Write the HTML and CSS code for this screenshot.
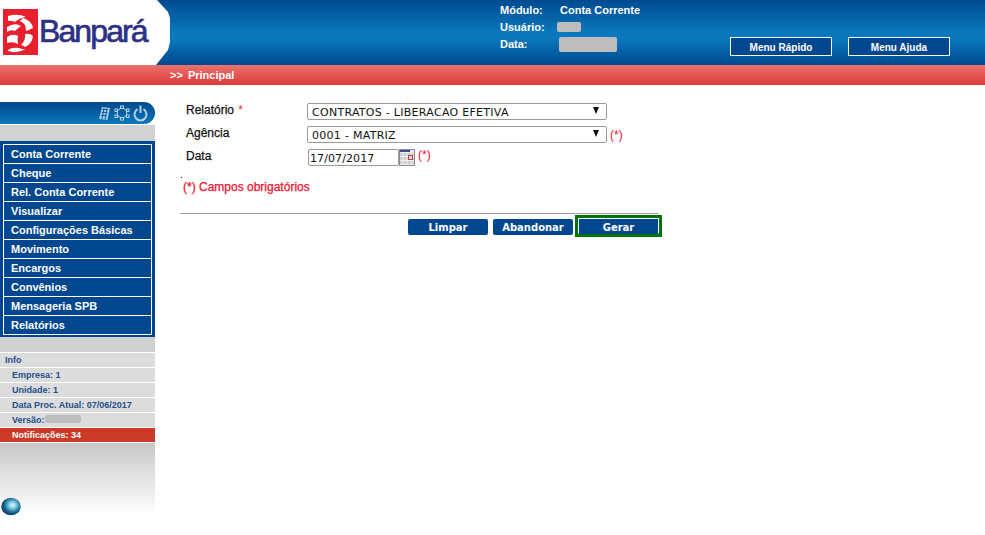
FILE: index.html
```html
<!DOCTYPE html>
<html lang="en">

<head>
    <meta charset="UTF-8">
    <title>Banpará - Conta Corrente</title>
    <link rel="stylesheet" href="styles.css">
</head>

<body>
    <header class="topbar">
        <div class="logo">
            <svg class="logo-bg" width="171" height="65" viewBox="0 0 171 65">
                <path d="M0 0H157L168 12L170 18V42L168 50L156 65H0Z" fill="#fff" />
            </svg>
            <svg class="logo-mark" width="35" height="46" viewBox="0 0 35 46">
                <rect width="35" height="46" fill="#e8202d" />
                <path d="M5 7Q15 4 23 8Q16 9 12 13Q8 11 5 12Z" fill="#fff" />
                <path d="M4 18Q12 13 18 17Q14 20 12 22Q8 20 4 23Z" fill="#fff" />
                <path d="M4 28Q10 24 15 27Q14 31 15 35Q10 32 4 34Z" fill="#fff" />
                <path d="M5 41Q9 38 16 39Q21 41 23 40Q14 45 5 42Z" fill="#fff" />
                <path d="M20 9Q29 12 30 19Q26 21 23 22Q23 14 17 12Z" fill="#fff" />
                <path d="M22 25Q27 24 30 27Q29 35 22 38Q20 36 18 36Q23 31 22 25Z" fill="#fff" />
            </svg>
            <span class="logo-text">Banpará</span>
        </div>
        <div class="session">
            <div class="session-row"><span class="session-label">Módulo:</span><span>Conta Corrente</span></div>
            <div class="session-row"><span class="session-label">Usuário:</span><span class="hidden-value user"></span></div>
            <div class="session-row"><span class="session-label">Data:</span><span class="hidden-value date"></span></div>
        </div>
        <div class="top-buttons">
            <a class="top-button">Menu Rápido</a>
            <a class="top-button">Menu Ajuda</a>
        </div>
    </header>

    <div class="crumb">&gt;&gt; <span>Principal</span></div>

    <div class="page">
        <aside class="sidebar">
            <div class="side-tools">
                <svg width="13" height="15" viewBox="0 0 13 15">
                    <path d="M4 1L12 2L9.500 14L1 13Z" fill="#a9c8e4" />
                    <path d="M4.500 3.500H10M3.800 6.500H9.500M3.200 9.500H8.800M6 2L4 13M9 2.500L7 13.500" stroke="#0a63a6" stroke-width="1" fill="none" />
                </svg>
                <svg width="16" height="16" viewBox="0 0 16 16" fill="none" stroke="#b9d3e8">
                    <circle cx="8" cy="8" r="4.800" stroke-width="1" />
                    <g fill="#0a5c9e" stroke-width="1">
                        <rect x="6.500" y="1" width="3" height="2.500" />
                        <rect x="6.500" y="12.500" width="3" height="2.500" />
                        <rect x="1" y="4" width="2.500" height="2.500" />
                        <rect x="12.500" y="4" width="2.500" height="2.500" />
                        <rect x="1" y="10" width="2.500" height="2.500" />
                        <rect x="12.500" y="10" width="2.500" height="2.500" />
                    </g>
                </svg>
                <svg width="15" height="17" viewBox="0 0 15 17" fill="none" stroke="#b4d2ea" stroke-width="2">
                    <path d="M4.500 4.200A6 6 0 1 0 10.500 4.200" />
                    <path d="M7.500 0.500V8" />
                </svg>
            </div>
            <div class="side-gap"></div>
            <nav class="menu">
                <a>Conta Corrente</a>
                <a>Cheque</a>
                <a>Rel. Conta Corrente</a>
                <a>Visualizar</a>
                <a>Configurações Básicas</a>
                <a>Movimento</a>
                <a>Encargos</a>
                <a>Convênios</a>
                <a>Mensageria SPB</a>
                <a>Relatórios</a>
            </nav>
            <div class="info-gap"></div>
            <ul class="info">
                <li class="info-title">Info</li>
                <li>Empresa: 1</li>
                <li>Unidade: 1</li>
                <li>Data Proc. Atual: 07/06/2017</li>
                <li>Versão: <span class="hidden-value version"></span></li>
                <li class="alert">Notificações: 34</li>
            </ul>
            <div class="side-foot">
                <svg width="20" height="19" viewBox="0 0 20 19">
                    <defs>
                        <radialGradient id="globe" cx="0.58" cy="0.42" r="0.62">
                            <stop offset="0" stop-color="#eef7fa" />
                            <stop offset="0.35" stop-color="#6cc0d8" />
                            <stop offset="0.7" stop-color="#14618f" />
                            <stop offset="1" stop-color="#0b3558" />
                        </radialGradient>
                    </defs>
                    <ellipse cx="10" cy="9.500" rx="9.700" ry="8.800" fill="url(#globe)" />
                </svg>
            </div>
        </aside>

        <main class="content">
            <form class="report-form">
                <div class="field">
                    <label>Relatório <em>*</em></label>
                    <div class="fake-select"><span>CONTRATOS - LIBERACAO EFETIVA</span><i></i></div>
                </div>
                <div class="field">
                    <label>Agência</label>
                    <div class="fake-select"><span>0001 - MATRIZ</span><i></i></div>
                    <span class="req low">(*)</span>
                </div>
                <div class="field">
                    <label>Data</label>
                    <input class="date-input" type="text" value="17/07/2017">
                    <svg class="cal" width="16" height="17" viewBox="0 0 16 17">
                        <rect width="16" height="17" fill="#cfcfcf" />
                        <rect x="0" y="0" width="16" height="4" fill="#ececec" />
                        <rect x="1" y="1" width="10" height="2" fill="#3d4a9c" />
                        <path d="M0 7.500H16M0 11.500H16M0 15.500H16M4 4V17M8 4V17M12 4V17" stroke="#efefef" stroke-width="1" />
                        <rect x="9.500" y="6.500" width="4" height="4" fill="#e5d3d3" stroke="#b5484f" />
                        <rect x="0.500" y="0.500" width="15" height="16" fill="none" stroke="#8e8e8e" />
                    </svg>
                    <span class="req">(*)</span>
                </div>
            </form>
            <p class="dot">.</p>
            <p class="required-note">(*) Campos obrigatórios</p>
            <hr class="rule">
            <div class="actions">
                <button type="button">Limpar</button>
                <button type="button">Abandonar</button>
                <button type="button" class="focused">Gerar</button>
            </div>
        </main>
    </div>
</body>

</html>
```

FILE: styles.css
```css
html,
body {
    margin: 0;
    padding: 0;
    height: 535px;
    overflow: hidden;
    background-color: #fff;
    font-family: 'Liberation Sans', Arial, sans-serif;
    font-size: 12px;
}

.topbar {
    height: 65px;
    display: flex;
    background: linear-gradient(#004a90 0%, #0a78bc 50%, #0a78bc 60%, #00488e 100%);
    color: #fff;
    font-weight: bold;
}

.logo {
    width: 500px;
    height: 65px;
    position: relative;
    flex: none;
}

.logo-bg {
    position: absolute;
    left: 0;
    top: 0;
    filter: blur(0.6px);
}

.logo-mark {
    position: absolute;
    left: 3px;
    top: 9px;
}

.logo-text {
    position: absolute;
    left: 39px;
    top: 11px;
    font-size: 32px;
    line-height: 40px;
    letter-spacing: -1.9px;
    color: #2c3185;
    font-weight: normal;
    -webkit-text-stroke: 0.7px #2c3185;
}

.session {
    width: 230px;
    flex: none;
    padding-top: 2px;
    font-size: 11px;
}

.session-row {
    display: flex;
    height: 17px;
    line-height: 17px;
}

.session-label {
    width: 60px;
}

.hidden-value {
    display: inline-block;
    background-color: #bdbdbd;
    border-radius: 2px;
}

.hidden-value.user {
    width: 24px;
    height: 10px;
    margin: 3px 0 0 -3px;
}

.hidden-value.date {
    width: 58px;
    height: 15px;
    margin: 1px 0 0 -1px;
}

.hidden-value.version {
    width: 36px;
    height: 8px;
    margin-left: -2px;
}

.top-buttons {
    display: flex;
    gap: 16px;
    padding-top: 37px;
}

.top-button {
    width: 98px;
    height: 15px;
    border: 1px solid #fff;
    padding: 2px 1px 0;
    background-color: #00478f;
    text-align: center;
    font-size: 10px;
    line-height: 16px;
}

.crumb {
    height: 20px;
    line-height: 20px;
    padding-left: 170px;
    background: linear-gradient(#ea7270, #df3a37);
    color: #fff;
    font-weight: bold;
    font-size: 11px;
}

.crumb span {
    margin-left: 2px;
}

.page {
    display: flex;
}

.sidebar {
    width: 155px;
    flex: none;
    padding-top: 17px;
}

.side-tools {
    height: 22px;
    display: flex;
    justify-content: flex-end;
    align-items: center;
    gap: 3px;
    padding-right: 7px;
    border-radius: 0 11px 11px 0;
    background: linear-gradient(#00488e, #0a78bc);
}

.side-gap {
    height: 16px;
    margin-top: 1px;
    background-color: #d2d2d2;
}

.menu {
    display: flex;
    flex-direction: column;
    padding: 3px 3px 2px;
    background-color: #00478f;
}

.menu a {
    height: 18px;
    line-height: 18px;
    border: 1px solid #fff;
    margin-top: -1px;
    padding-left: 7px;
    color: #fff;
    font-weight: bold;
    font-size: 11px;
}

.menu a:first-child {
    margin-top: 0;
}

.info-gap {
    height: 15px;
    background-color: #d0d0d0;
}

.info {
    list-style: none;
    margin: 0;
    padding: 0;
}

.info li {
    height: 14px;
    line-height: 14px;
    border-top: 1px solid #fff;
    padding-left: 12px;
    background-color: #dcdcdc;
    color: #1f4e8c;
    font-size: 9px;
    font-weight: bold;
}

.info li.info-title {
    padding-left: 5px;
}

.info li.alert {
    background-color: #cb3a26;
    color: #fff;
}

.side-foot {
    height: 72px;
    border-top: 1px solid #fff;
    background: linear-gradient(#c8c8c8, #fff);
    display: flex;
    align-items: flex-end;
}

.side-foot svg {
    margin: 0 0 -1px 1px;
}

.content {
    flex: 1;
    padding: 18px 0 0 25px;
    color: #111;
}

.field {
    display: flex;
    align-items: flex-start;
    height: 23px;
    padding-left: 6px;
}

.field label {
    width: 121px;
    line-height: 14px;
    flex: none;
    -webkit-text-stroke: 0.25px #111;
}

.field em {
    font-style: normal;
    color: #e8331c;
    margin-left: 1px;
    -webkit-text-stroke: 0;
}

.fake-select {
    box-sizing: border-box;
    width: 300px;
    height: 17px;
    border: 1px solid #9a9a9a;
    border-radius: 2px;
    display: flex;
    justify-content: space-between;
    align-items: center;
    padding: 1px 7px 0 4px;
    font-family: 'DejaVu Sans', Verdana, sans-serif;
    font-size: 11px;
    letter-spacing: 0.28px;
    background-color: #fff;
}

.fake-select i {
    width: 0;
    height: 0;
    border-left: 3.500px solid transparent;
    border-right: 3.500px solid transparent;
    border-top: 7px solid #111;
    margin-top: -4px;
}

.req {
    color: #f01030;
    margin-left: 3px;
    line-height: 13px;
}

.req.low {
    line-height: 18px;
}

.date-input {
    box-sizing: border-box;
    width: 91px;
    height: 17px;
    margin: 0 0 0 1px;
    padding: 1px 1px 0;
    border: 1px solid #9a9a9a;
    border-radius: 2px;
    font-family: 'DejaVu Sans', Verdana, sans-serif;
    font-size: 11px;
    letter-spacing: 0.1px;
    color: #111;
}

.dot {
    margin: 1px 0 0;
    height: 3px;
    line-height: 3px;
    font-size: 10px;
}

.required-note {
    margin: 3px 0 0 3px;
    color: #f01030;
    line-height: 16px;
    -webkit-text-stroke: 0.25px #f01030;
}

.rule {
    width: 478px;
    height: 1px;
    margin: 18px 0 0;
    border: 0;
    background-color: #a0a0a0;
}

.actions {
    width: 479px;
    display: flex;
    justify-content: flex-end;
    align-items: flex-start;
    gap: 5px;
    margin-top: 5px;
}

.actions button {
    width: 80px;
    height: 16px;
    padding: 0;
    border: 0;
    border-radius: 2px;
    background-color: #00478f;
    color: #fff;
    font-family: 'DejaVu Sans', Verdana, sans-serif;
    font-size: 10px;
    font-weight: bold;
}

.actions button.focused {
    box-sizing: content-box;
    width: 79px;
    height: 11px;
    margin-top: -1px;
    padding-top: 3px;
    border: 1px solid #fff;
    border-bottom-color: #00478f;
    border-radius: 0;
    outline: 3px solid #007400;
}
```
